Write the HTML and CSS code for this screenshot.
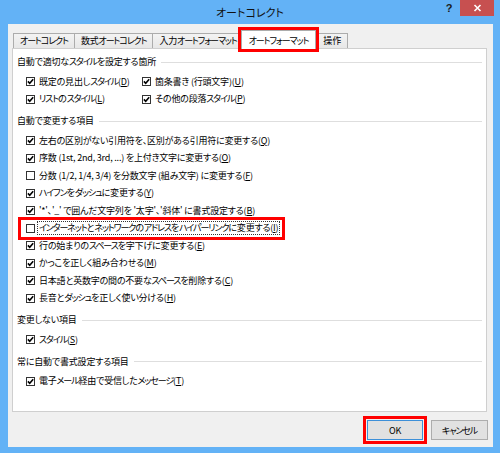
FILE: index.html
```html
<!DOCTYPE html>
<html lang="ja">
<head>
<meta charset="utf-8">
<title>オートコレクト</title>
<link rel="stylesheet" href="styles.css">
</head>
<body>
<div class="window">
  <div class="titlebar">
    <div class="spacer"></div>
    <div class="title">オートコレクト</div>
    <div class="controls">
      <span class="help">?</span>
      <span class="close"><svg width="9" height="8" viewBox="0 0 9 8"><path d="M1.5 1 L7.5 7 M7.5 1 L1.5 7" stroke="#fff" stroke-width="1.6" fill="none"/></svg></span>
    </div>
  </div>
  <div class="client">
    <div class="tabs">
      <div class="tab"><span class="k">オートコレクト</span></div>
      <div class="tab">数式<span class="k">オートコレクト</span></div>
      <div class="tab">入力<span class="k">オートフォーマット</span></div>
      <div class="tab active"><span class="k">オートフォーマット</span></div>
      <div class="tab">操作</div>
    </div>
    <div class="panel">
      <section class="group">
        <div class="heading">自動で適切な<span class="k">スタイル</span>を設定する箇所</div>
        <div class="grid2">
          <div class="row"><span class="cb on"><svg viewBox="0 0 7 7"><path d="M0.9 3.4 L2.7 5.3 L6.2 1.3"/></svg></span><span class="lbl">既定の見出し<span class="k">スタイル</span>(<u>D</u>)</span></div>
          <div class="row"><span class="cb on"><svg viewBox="0 0 7 7"><path d="M0.9 3.4 L2.7 5.3 L6.2 1.3"/></svg></span><span class="lbl">箇条書き (行頭文字)(<u>U</u>)</span></div>
          <div class="row"><span class="cb on"><svg viewBox="0 0 7 7"><path d="M0.9 3.4 L2.7 5.3 L6.2 1.3"/></svg></span><span class="lbl"><span class="k">リスト</span>の<span class="k">スタイル</span>(<u>L</u>)</span></div>
          <div class="row"><span class="cb on"><svg viewBox="0 0 7 7"><path d="M0.9 3.4 L2.7 5.3 L6.2 1.3"/></svg></span><span class="lbl">その他の段落<span class="k">スタイル</span>(<u>P</u>)</span></div>
        </div>
      </section>
      <section class="group">
        <div class="heading">自動で変更する項目</div>
        <div class="list">
          <div class="row"><span class="cb on"><svg viewBox="0 0 7 7"><path d="M0.9 3.4 L2.7 5.3 L6.2 1.3"/></svg></span><span class="lbl">左右の区別がない引用符を、区別がある引用符に変更する(<u>Q</u>)</span></div>
          <div class="row"><span class="cb on"><svg viewBox="0 0 7 7"><path d="M0.9 3.4 L2.7 5.3 L6.2 1.3"/></svg></span><span class="lbl">序数 (1st, 2nd, 3rd, ...) を上付き文字に変更する(<u>O</u>)</span></div>
          <div class="row"><span class="cb"></span><span class="lbl">分数 (1/2, 1/4, 3/4) を分数文字 (組み文字) に変更する(<u>F</u>)</span></div>
          <div class="row"><span class="cb on"><svg viewBox="0 0 7 7"><path d="M0.9 3.4 L2.7 5.3 L6.2 1.3"/></svg></span><span class="lbl"><span class="k">ハイフン</span>を<span class="k">ダッシュ</span>に変更する(<u>Y</u>)</span></div>
          <div class="row"><span class="cb on"><svg viewBox="0 0 7 7"><path d="M0.9 3.4 L2.7 5.3 L6.2 1.3"/></svg></span><span class="lbl">'*'、'_' で囲んだ文字列を '太字'、'斜体' に書式設定する(<u>B</u>)</span></div>
          <div class="row hl"><span class="cb"></span><span class="lbl focus"><span class="k">インターネット</span>と<span class="k">ネットワーク</span>の<span class="k">アドレス</span>を<span class="k">ハイパーリンク</span>に変更する(<u>I</u>)</span></div>
          <div class="row"><span class="cb on"><svg viewBox="0 0 7 7"><path d="M0.9 3.4 L2.7 5.3 L6.2 1.3"/></svg></span><span class="lbl">行の始まりの<span class="k">スペース</span>を字下げに変更する(<u>E</u>)</span></div>
          <div class="row"><span class="cb on"><svg viewBox="0 0 7 7"><path d="M0.9 3.4 L2.7 5.3 L6.2 1.3"/></svg></span><span class="lbl">かっこを正しく組み合わせる(<u>M</u>)</span></div>
          <div class="row"><span class="cb on"><svg viewBox="0 0 7 7"><path d="M0.9 3.4 L2.7 5.3 L6.2 1.3"/></svg></span><span class="lbl">日本語と英数字の間の不要な<span class="k">スペース</span>を削除する(<u>C</u>)</span></div>
          <div class="row"><span class="cb on"><svg viewBox="0 0 7 7"><path d="M0.9 3.4 L2.7 5.3 L6.2 1.3"/></svg></span><span class="lbl">長音と<span class="k">ダッシュ</span>を正しく使い分ける(<u>H</u>)</span></div>
        </div>
      </section>
      <section class="group">
        <div class="heading">変更しない項目</div>
        <div class="list">
          <div class="row"><span class="cb on"><svg viewBox="0 0 7 7"><path d="M0.9 3.4 L2.7 5.3 L6.2 1.3"/></svg></span><span class="lbl"><span class="k">スタイル</span>(<u>S</u>)</span></div>
        </div>
      </section>
      <section class="group">
        <div class="heading">常に自動で書式設定する項目</div>
        <div class="list">
          <div class="row"><span class="cb on"><svg viewBox="0 0 7 7"><path d="M0.9 3.4 L2.7 5.3 L6.2 1.3"/></svg></span><span class="lbl">電子<span class="k">メール</span>経由で受信した<span class="k">メッセージ</span>(<u>T</u>)</span></div>
        </div>
      </section>
    </div>
    <div class="buttons">
      <button class="btn ok">OK</button>
      <button class="btn"><span class="k">キャンセル</span></button>
    </div>
  </div>
</div>
</body>
</html>
```

FILE: styles.css
```css
* { box-sizing: border-box; }
html, body { margin: 0; padding: 0; }
body {
  width: 500px;
  height: 453px;
  overflow: hidden;
  font-family: "Noto Sans CJK JP", sans-serif;
  font-feature-settings: "palt" 1;
  font-size: 9px;
  letter-spacing: -0.2px;
  color: #000;
}
.k { letter-spacing: -1.1px; }
.window {
  width: 500px;
  height: 453px;
  background: #63b2f6;
  display: flex;
  flex-direction: column;
}
.titlebar {
  height: 24px;
  display: grid;
  grid-template-columns: 1fr auto 1fr;
  flex: none;
}
.title {
  font-size: 11px;
  line-height: 24px;
  letter-spacing: 0;
  color: #111;
}
.controls {
  justify-self: end;
  display: flex;
  align-items: flex-start;
  margin-right: 6px;
}
.help {
  font-family: "Liberation Sans", sans-serif;
  font-weight: bold;
  font-size: 11px;
  line-height: 16px;
  width: 10px;
  text-align: center;
  margin-right: 6px;
  color: #1a1a1a;
}
.close {
  width: 34px;
  height: 16px;
  background: #c75050;
  display: flex;
  align-items: center;
  justify-content: center;
}
.close svg { display: block; }
.client {
  flex: 1;
  margin: 0 7px 6px 8px;
  background: #f0f0f0;
  padding: 5px 6px 7px 4px;
  display: flex;
  flex-direction: column;
}
.tabs {
  height: 19px;
  display: flex;
  align-items: flex-end;
  padding-left: 1px;
  position: relative;
  z-index: 2;
  flex: none;
}
.tab {
  height: 15px;
  line-height: 14px;
  padding: 0 6px;
  border: 1px solid #acacac;
  border-bottom: none;
  background: linear-gradient(#f3f3f3, #e7e7e7);
  margin-right: -1px;
  color: #000;
  white-space: nowrap;
}
.tab.active {
  height: 19px;
  line-height: 20px;
  background: #fff;
  margin: 0 -2px -1px -2px;
  padding: 0 7px;
  position: relative;
  z-index: 3;
  outline: 3px solid #ff0000;
}
.tab.active + .tab { margin-left: 2px; }
.panel {
  height: 364px;
  flex: none;
  background: #fff;
  border: 1px solid #cfcfcf;
  padding: 3px 4px 0 4px;
}
.group + .group { margin-top: 3px; }
.heading {
  height: 20px;
  line-height: 20px;
  display: flex;
  align-items: center;
  white-space: nowrap;
}
.heading::after {
  content: "";
  flex: 1;
  height: 1px;
  background: #dedede;
  margin-left: 5px;
}
.grid2 {
  margin-top: 1px;
  display: grid;
  grid-template-columns: 116px auto;
  margin-left: 9px;
}
.list {
  margin-top: 1px;
  margin-left: 9px;
}
.row {
  height: 17.5px;
  display: flex;
  align-items: center;
  white-space: nowrap;
}
.cb {
  width: 9px;
  height: 9px;
  border: 1px solid #333;
  background: #fff;
  margin-right: 2px;
  flex: none;
  display: flex;
}
.cb svg {
  width: 7px;
  height: 7px;
  fill: none;
  stroke: #000;
  stroke-width: 1.6;
}
.lbl { line-height: 12px; padding: 0 1px; border: 1px solid transparent; }
.lbl u { text-decoration-thickness: 1px; text-underline-offset: 1px; }
.row.hl {
  width: fit-content;
  margin-left: -5px;
  padding: 0 2px 0 5px;
  outline: 3px solid #ff0000;
}
.lbl.focus { border: 1px dotted #333; }
.buttons {
  display: flex;
  justify-content: flex-end;
  gap: 8px;
  margin-top: 8px;
  margin-right: -1px;
}
.btn {
  font: inherit;
  font-family: "Noto Sans CJK JP", sans-serif;
  font-feature-settings: "palt" 1;
  font-size: 9px;
  letter-spacing: -0.2px;
  width: 56px;
  height: 20px;
  border: 1px solid #adadad;
  background: #e1e1e1;
  color: #000;
  padding: 0;
  margin: 0;
}
.btn + .btn { width: 57px; }
.btn.ok {
  border-color: #3c8fd8;
  outline: 3px solid #ff0000;
  outline-offset: 1px;
}
```
